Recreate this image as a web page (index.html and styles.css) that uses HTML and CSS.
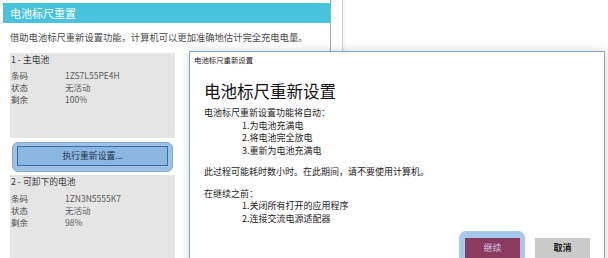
FILE: index.html
```html
<!DOCTYPE html>
<html lang="zh-CN">
<head>
<meta charset="utf-8">
<title>电池标尺重置</title>
<link rel="stylesheet" href="styles.css">
</head>
<body>
<div class="app">
  <div class="main">
    <div class="header">电池标尺重置</div>
    <div class="desc">借助电池标尺重新设置功能，计算机可以更加准确地估计完全充电电量。</div>
    <div class="cards">
      <div class="card card-first">
        <div class="card-title">1 - 主电池</div>
        <div class="rows">
          <div class="row"><span class="label">条码</span><span class="value">1ZS7L55PE4H</span></div>
          <div class="row"><span class="label">状态</span><span class="value">无活动</span></div>
          <div class="row"><span class="label">剩余</span><span class="value">100%</span></div>
        </div>
      </div>
      <div class="focus-ring">
        <div class="reset-btn">执行重新设置...</div>
      </div>
      <div class="card card-second">
        <div class="card-title">2 - 可卸下的电池</div>
        <div class="rows">
          <div class="row"><span class="label">条码</span><span class="value">1ZN3N5555K7</span></div>
          <div class="row"><span class="label">状态</span><span class="value">无活动</span></div>
          <div class="row"><span class="label">剩余</span><span class="value">98%</span></div>
        </div>
      </div>
    </div>
  </div>
  <div class="gap"></div>
  <div class="side"></div>

  <div class="dialog">
    <div class="dlg-titlebar">电池标尺重新设置</div>
    <div class="dlg-body">
      <div class="dlg-heading">电池标尺重新设置</div>
      <div class="para">
        <div class="line">电池标尺重新设置功能将自动：</div>
        <div class="line indent">1.为电池充满电</div>
        <div class="line indent">2.将电池完全放电</div>
        <div class="line indent">3.重新为电池充满电</div>
      </div>
      <div class="para para-gap">
        <div class="line">此过程可能耗时数小时。在此期间，请不要使用计算机。</div>
      </div>
      <div class="para para-gap">
        <div class="line">在继续之前：</div>
        <div class="line indent">1.关闭所有打开的应用程序</div>
        <div class="line indent">2.连接交流电源适配器</div>
      </div>
    </div>
    <div class="dlg-footer">
      <div class="btn-ring">
        <div class="btn btn-continue">继续</div>
      </div>
      <div class="btn btn-cancel">取消</div>
    </div>
  </div>
</div>
</body>
</html>
```
FILE: styles.css
```css
* { box-sizing: border-box; }
html, body {
  margin: 0;
  padding: 0;
  background: #ffffff;
  overflow: hidden;
}
body {
  font-family: "Noto Sans CJK SC", "Noto Sans", sans-serif;
  width: 608px;
  height: 258px;
}
.app {
  position: relative;
  display: flex;
  width: 608px;
  height: 258px;
  overflow: hidden;
}
.main {
  width: 331px;
  height: 258px;
  border-right: 1px solid #a9a9a9;
  padding: 3px 0 0 3px;
  flex: none;
}
.header {
  height: 20px;
  background: #47c3dc;
  color: #ffffff;
  font-size: 11px;
  line-height: 20px;
  padding-left: 7px;
}
.desc {
  margin-top: 7px;
  padding-left: 7px;
  font-size: 9.3px;
  line-height: 14px;
  color: #4a4a4a;
  white-space: nowrap;
}
.cards {
  margin-top: 9px;
  margin-left: 7px;
  width: 165px;
}
.card {
  background: #e5e5e5;
  padding: 1px 0 0 1px;
  color: #4e4e4e;
  font-size: 8.5px;
}
.card-first { height: 85px; }
.card-second { height: 90px; }
.card-title {
  line-height: 12px;
  font-size: 8.8px;
  color: #3c3c3c;
}
.rows { margin-top: 3px; }
.card-second .rows { margin-top: 4px; }
.row {
  display: flex;
  line-height: 12px;
}
.label { width: 54px; flex: none; }
.value { color: #5a5a5a; }
.focus-ring {
  margin: 4px 2px 3px 2px;
  height: 30px;
  border-radius: 6px;
  background: #9ec0e2;
  border: 1px solid #86acd6;
  padding: 3px 4px;
}
.reset-btn {
  height: 20px;
  border: 1px solid #3d6da3;
  background: #8bb6df;
  color: #1f3550;
  font-size: 8.8px;
  line-height: 18px;
  text-align: center;
}
.gap {
  width: 11px;
  flex: none;
}
.side {
  flex: 1;
  border-left: 1px solid #d4d4d4;
  box-shadow: inset 3px 0 3px -2px rgba(0,0,0,0.08);
}
.dialog {
  position: absolute;
  left: 189px;
  top: 51px;
  width: 416px;
  height: 230px;
  background: #ffffff;
  border: 1px solid #7ba6d3;
  border-right-color: #9aa4b0;
  box-shadow: 0 0 9px rgba(0,0,0,0.16);
  color: #1e1e1e;
}
.dlg-titlebar {
  height: 16px;
  padding-left: 4px;
  font-size: 7.4px;
  line-height: 16px;
  color: #222;
}
.dlg-body {
  padding-left: 14px;
}
.dlg-heading {
  margin-top: 10px;
  font-size: 16.5px;
  line-height: 26px;
  color: #111;
}
.para {
  font-size: 9px;
  color: #222;
}
.dlg-heading + .para { margin-top: 3px; }
.para-gap { margin-top: 9px; }
.line {
  line-height: 12.5px;
  white-space: nowrap;
}
.indent { padding-left: 38px; }
.dlg-footer {
  display: flex;
  justify-content: flex-end;
  align-items: flex-start;
  padding-right: 14px;
  margin-top: 6px;
}
.btn-ring {
  padding: 7px 5px 5px 6px;
  border-radius: 7px;
  background: #a6c8ea;
  margin-right: 10px;
}
.btn {
  width: 55px;
  height: 20px;
  font-size: 9px;
  line-height: 20px;
  text-align: center;
}
.btn-continue {
  background: #8a3b5e;
  color: #d6c6e4;
}
.btn-cancel {
  margin-top: 7px;
  background: #cacaca;
  color: #1a1a1a;
  font-weight: bold;
}
```
